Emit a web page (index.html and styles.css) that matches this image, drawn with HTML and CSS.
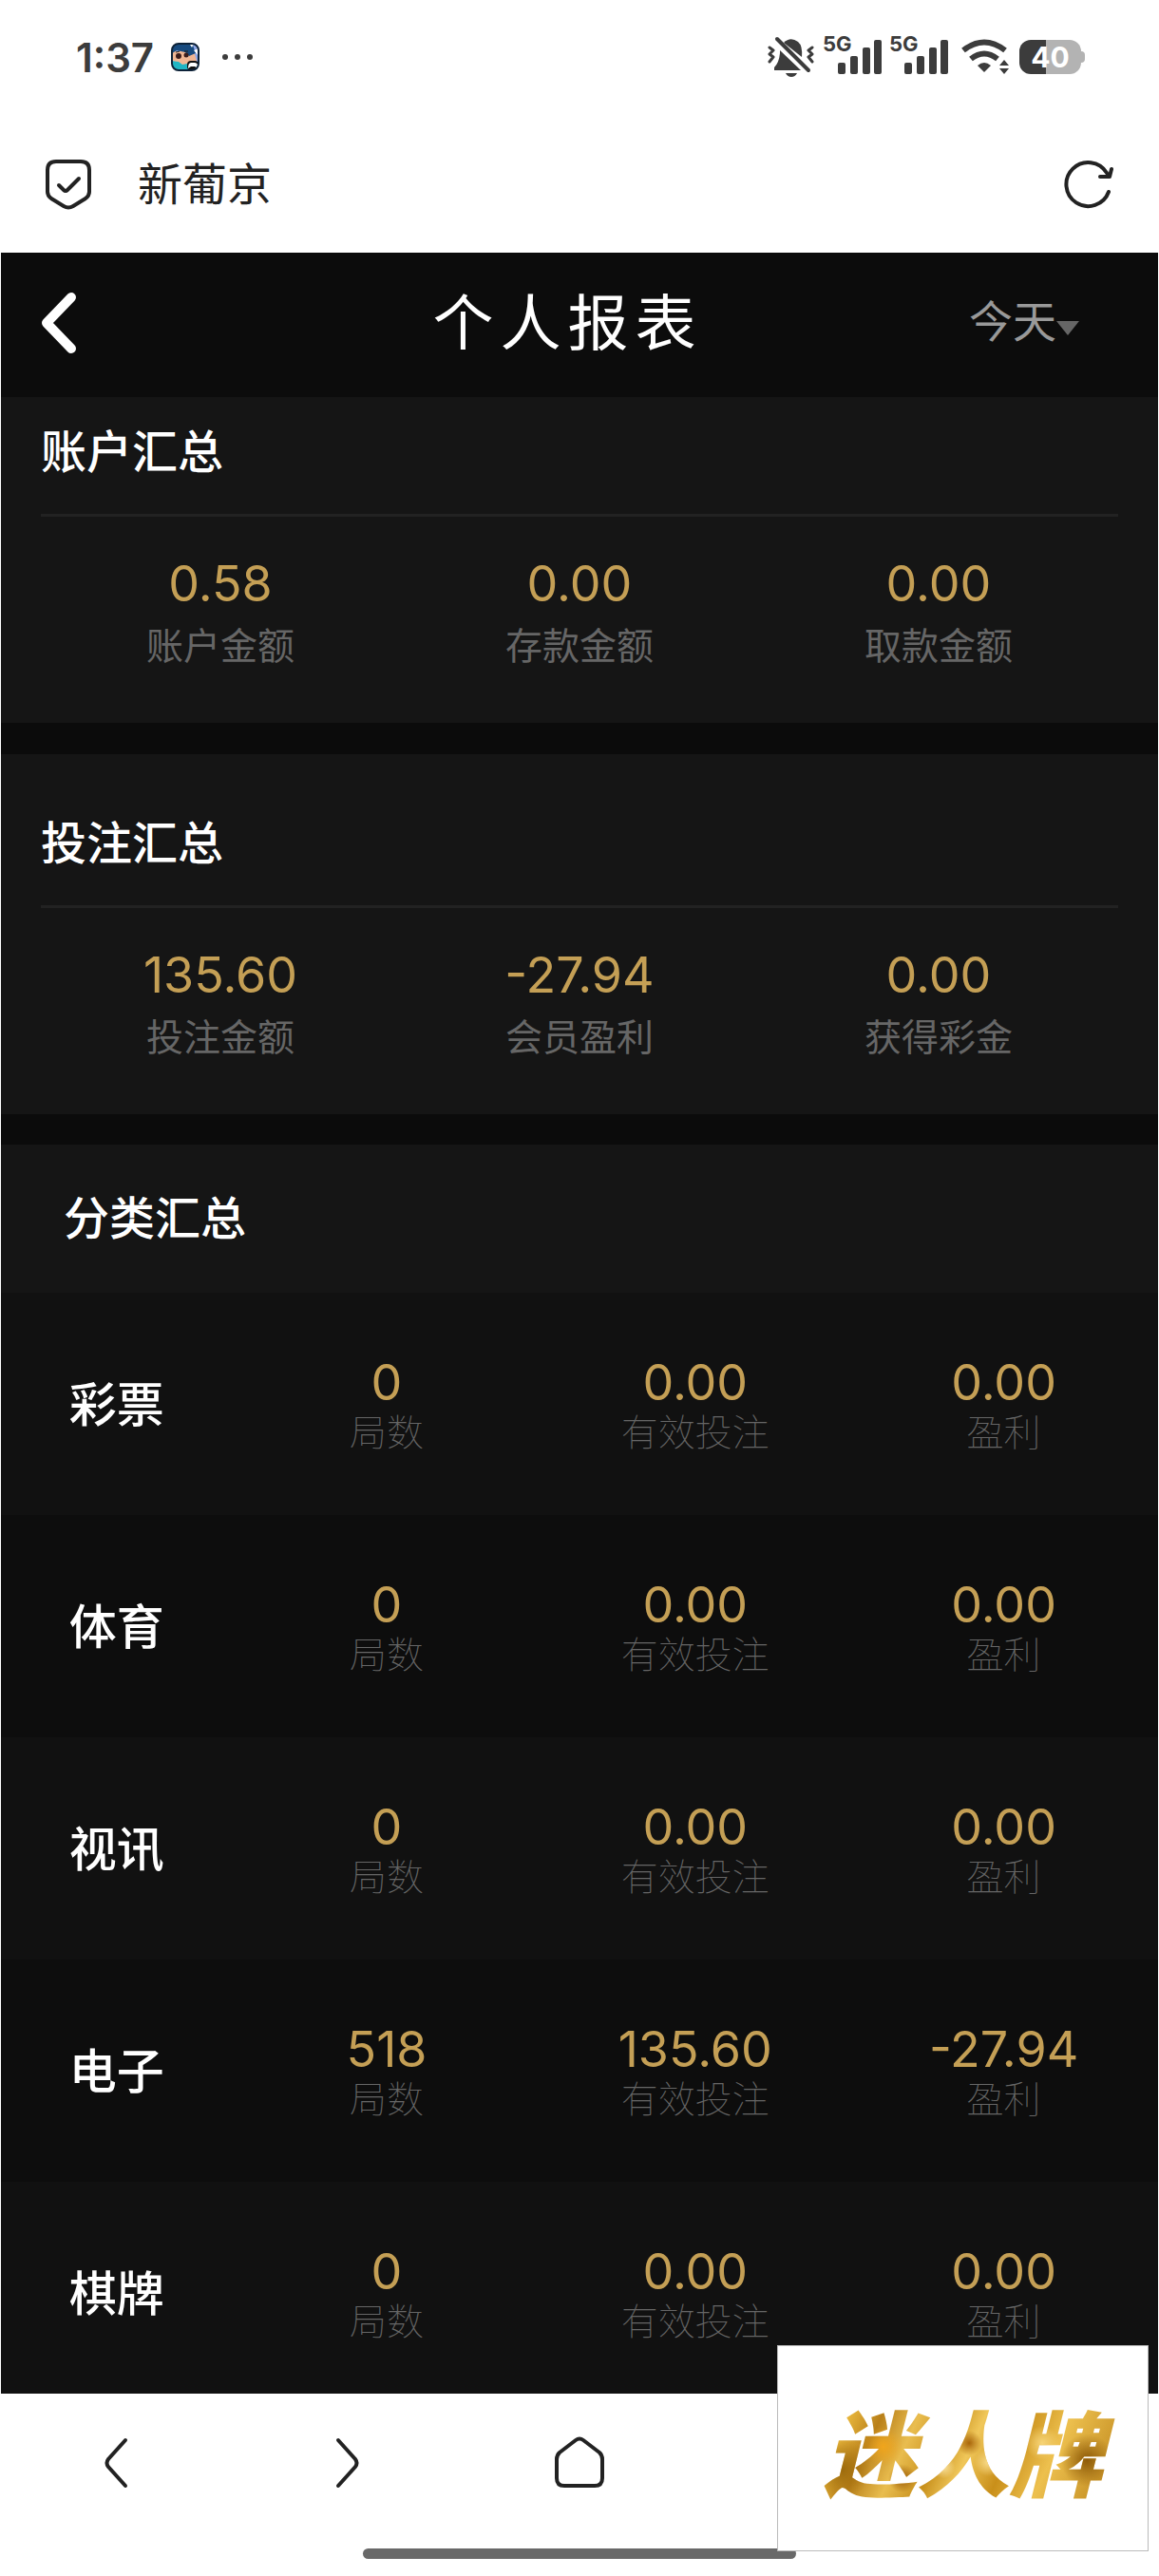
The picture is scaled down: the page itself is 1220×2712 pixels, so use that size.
FILE: index.html
```html
<!DOCTYPE html>
<html lang="zh-CN">
<head>
    <meta charset="UTF-8">
    <meta name="viewport" content="width=device-width, initial-scale=1.0">
    <title>个人报表</title>
    <link rel="stylesheet" href="styles.css">
</head>
<body>
    <!-- 状态栏 -->
    <div class="status-bar">
        <span class="time">1:37</span>
        <svg class="app-icon" width="30" height="30" viewBox="0 0 30 30">
            <clipPath id="appClip"><rect x="1" y="1" width="28" height="28" rx="7"/></clipPath>
            <g clip-path="url(#appClip)">
                <rect width="30" height="30" fill="#8fa8e8"/>
                <path d="M0 9H24L27 19L20 25L12 24L0 18Z" fill="#f0b694"/>
                <path d="M0 0H22L26 11L19 14L15 10L6 8L0 12Z" fill="#174a7e"/>
                <path d="M0 19L8 20L12 23L17 22L20 30H0Z" fill="#1fb5c4"/>
                <path d="M20 2L24 1L22 5ZM24 8L29 6V14Z" fill="#fff"/>
                <circle cx="8" cy="14" r="3" fill="#3a1c1c"/>
                <circle cx="16" cy="13" r="2.5" fill="#3a1c1c"/>
                <path d="M5 10L9 9M14 9L18 9" stroke="#1b1b1b" stroke-width="1"/>
                <rect x="17" y="19" width="12" height="10" rx="4" fill="#111"/>
                <path d="M18 27Q18 21 21 21H25Q29 21 28 27L25 25H21Z" fill="#fff"/>
            </g>
            <rect x="1" y="1" width="28" height="28" rx="7" fill="none" stroke="#0d2238" stroke-width="2"/>
        </svg>
        <svg class="more" width="32" height="8" viewBox="0 0 32 8" fill="#3c3c3c">
            <circle cx="3" cy="4" r="3"/><circle cx="16" cy="4" r="3"/><circle cx="29" cy="4" r="3"/>
        </svg>

        <div class="status-icons">
            <svg width="50" height="44" viewBox="0 0 50 44" fill="#3c3c3c">
                <path d="M13 18Q12 28 7 33V36H35L13 15Z"/>
                <path d="M17 7Q24 0 32 6Q37 10 36 22Z"/>
                <path d="M19 39H31Q29 43 25 43Q21 43 19 39Z"/>
                <path d="M10 3L43 36" stroke="#3c3c3c" stroke-width="4" stroke-linecap="round"/>
                <path d="M2 12L6 15L2 19L6 22L2 27M47 12L43 15L47 19L43 22L47 27" fill="none" stroke="#3c3c3c" stroke-width="3" stroke-linejoin="round" stroke-linecap="round"/>
            </svg>
            <div class="signal">
                <span>5G</span>
                <svg width="46" height="36" viewBox="0 0 46 36" fill="#3c3c3c">
                    <rect y="24" width="8" height="12" rx="2"/><rect x="13" y="17" width="8" height="19" rx="2"/><rect x="26" y="8" width="8" height="28" rx="2"/><rect x="38" width="8" height="36" rx="2"/>
                </svg>
            </div>
            <div class="signal">
                <span>5G</span>
                <svg width="46" height="36" viewBox="0 0 46 36" fill="#3c3c3c">
                    <rect y="24" width="8" height="12" rx="2"/><rect x="13" y="17" width="8" height="19" rx="2"/><rect x="26" y="8" width="8" height="28" rx="2"/><rect x="38" width="8" height="36" rx="2"/>
                </svg>
            </div>
            <svg class="wifi" width="50" height="38" viewBox="0 0 50 38">
                <path d="M2 12Q24 -5 46 12" fill="none" stroke="#3c3c3c" stroke-width="6"/>
                <path d="M10 21Q24 10 38 21" fill="none" stroke="#3c3c3c" stroke-width="6"/>
                <path d="M17 28Q24 22 31 28L24 35Z" fill="#3c3c3c"/>
                <path d="M40 28L45 22L50 28ZM40 31H50L45 37Z" fill="#3c3c3c"/>
            </svg>
            <div class="battery"><span>40</span></div>
        </div>
    </div>

    <!-- 浏览器地址栏 -->
    <div class="browser-bar">
        <svg width="50" height="54" viewBox="0 0 50 54" fill="none" stroke="#222" stroke-width="4" stroke-linecap="round" stroke-linejoin="round">
            <path d="M12 3H38Q47 3 47 12V35Q47 39 43 42L30 50Q25 53 20 50L7 42Q3 39 3 35V12Q3 3 12 3Z"/>
            <path d="M15 28L20 33Q22 35 24 33L36 21"/>
        </svg>
        <span class="site-name">新葡京</span>
        <button class="icon-btn" type="button" aria-label="刷新">
            <svg width="52" height="52" viewBox="0 0 52 52" fill="none" stroke="#222" stroke-width="4" stroke-linecap="round" stroke-linejoin="round">
                <path d="M47 34A23 23 0 1 1 45 14L47 17"/>
                <path d="M50 10L48 18L38 18"/>
            </svg>
        </button>
    </div>

    <!-- 报表内容 -->
    <div class="report">
        <header class="report-header">
            <button class="back-btn" type="button" aria-label="返回">
                <svg width="38" height="66" viewBox="0 0 38 66" fill="none" stroke="#fff" stroke-width="10" stroke-linecap="round" stroke-linejoin="round">
                    <path d="M33 6L7 33L33 60"/>
                </svg>
            </button>
            <h1>个人报表</h1>
            <div class="date-select">
                <select aria-label="日期">
                    <option selected>今天</option>
                    <option>昨天</option>
                </select>
            </div>
        </header>

        <section class="summary">
            <h2>账户汇总</h2>
            <dl>
                <div><dd>0.58</dd><dt>账户金额</dt></div>
                <div><dd>0.00</dd><dt>存款金额</dt></div>
                <div><dd>0.00</dd><dt>取款金额</dt></div>
            </dl>
        </section>

        <section class="summary summary-bet">
            <h2>投注汇总</h2>
            <dl>
                <div><dd>135.60</dd><dt>投注金额</dt></div>
                <div><dd>-27.94</dd><dt>会员盈利</dt></div>
                <div><dd>0.00</dd><dt>获得彩金</dt></div>
            </dl>
        </section>

        <section class="category">
            <h2>分类汇总</h2>
            <table>
                <tr>
                    <th scope="row">彩票</th>
                    <td><b>0</b><small>局数</small></td>
                    <td><b>0.00</b><small>有效投注</small></td>
                    <td><b>0.00</b><small>盈利</small></td>
                </tr>
                <tr>
                    <th scope="row">体育</th>
                    <td><b>0</b><small>局数</small></td>
                    <td><b>0.00</b><small>有效投注</small></td>
                    <td><b>0.00</b><small>盈利</small></td>
                </tr>
                <tr>
                    <th scope="row">视讯</th>
                    <td><b>0</b><small>局数</small></td>
                    <td><b>0.00</b><small>有效投注</small></td>
                    <td><b>0.00</b><small>盈利</small></td>
                </tr>
                <tr>
                    <th scope="row">电子</th>
                    <td><b>518</b><small>局数</small></td>
                    <td><b>135.60</b><small>有效投注</small></td>
                    <td><b>-27.94</b><small>盈利</small></td>
                </tr>
                <tr>
                    <th scope="row">棋牌</th>
                    <td><b>0</b><small>局数</small></td>
                    <td><b>0.00</b><small>有效投注</small></td>
                    <td><b>0.00</b><small>盈利</small></td>
                </tr>
            </table>
        </section>
    </div>

    <!-- 底部导航 -->
    <footer class="bottom-bar">
        <nav>
            <button class="icon-btn" type="button" aria-label="后退">
                <svg width="28" height="56" viewBox="0 0 28 56" fill="none" stroke="#222" stroke-width="4" stroke-linecap="round">
                    <path d="M24 4L6 24Q3 28 6 32L24 52"/>
                </svg>
            </button>
            <button class="icon-btn" type="button" aria-label="前进">
                <svg width="28" height="56" viewBox="0 0 28 56" fill="none" stroke="#222" stroke-width="4" stroke-linecap="round">
                    <path d="M4 4L22 24Q25 28 22 32L4 52"/>
                </svg>
            </button>
            <button class="icon-btn" type="button" aria-label="主页">
                <svg width="54" height="56" viewBox="0 0 54 56" fill="none" stroke="#222" stroke-width="4" stroke-linejoin="round">
                    <path d="M23 4Q27 1 31 4L48 17Q51 20 51 24V44Q51 52 43 52H11Q3 52 3 44V24Q3 20 6 17Z"/>
                </svg>
            </button>
        </nav>
        <div class="home-indicator"></div>
    </footer>

    <div class="watermark"><span>迷人牌</span></div>
</body>
</html>
```
FILE: styles.css
```css
* {
    box-sizing: border-box;
}
body {
    margin: 0;
    height: 100vh;
    display: flex;
    flex-direction: column;
    position: relative;
    background: #fff;
    font-family: Inter, "Noto Sans CJK SC", sans-serif;
}
h1, h2, dl, dd {
    margin: 0;
}
button {
    padding: 0;
    border: none;
    background: none;
    cursor: pointer;
}
svg {
    display: block;
    flex: none;
}

/* 状态栏 */
.status-bar {
    display: flex;
    align-items: center;
    height: 120px;
    flex: none;
    padding: 0 76px 0 80px;
    color: #3c3c3c;
}
.time {
    font-size: 42px;
    font-weight: 600;
}
.app-icon {
    margin-left: 18px;
}
.more {
    margin-left: 24px;
}
.status-icons {
    display: flex;
    align-items: center;
    margin-left: auto;
}
.signal {
    position: relative;
    width: 62px;
    margin-left: 8px;
}
.signal svg {
    margin-left: auto;
}
.signal span {
    position: absolute;
    left: 0;
    top: -6px;
    font-size: 22px;
    line-height: 20px;
    font-weight: 700;
}
.wifi {
    margin-left: 14px;
}
.battery {
    position: relative;
    width: 65px;
    height: 36px;
    margin: 0 6px 0 11px;
    border-radius: 12px;
    background: linear-gradient(90deg, #3c3c3c 43%, #b3b3b3 43%);
    color: #fff;
    font-size: 30px;
    line-height: 36px;
    font-weight: 700;
    text-align: center;
}
.battery::after {
    content: "";
    position: absolute;
    right: -4px;
    top: 12px;
    width: 4px;
    height: 12px;
    border-radius: 0 4px 4px 0;
    background: #b3b3b3;
}

/* 地址栏 */
.browser-bar {
    display: flex;
    align-items: center;
    height: 146px;
    flex: none;
    padding: 2px 48px 0 47px;
}
.site-name {
    flex: 1;
    margin-left: 48px;
    font-size: 47px;
    line-height: 60px;
    color: #222;
}

/* 报表 */
.report {
    flex: 1;
    min-height: 0;
    overflow: hidden;
    margin: 0 1px;
    background: #0b0b0b;
    color: #fff;
}
.report-header {
    display: flex;
    align-items: center;
    height: 152px;
    padding-bottom: 4px;
    background: #0c0c0c;
}
.back-btn {
    width: 174px;
    padding-left: 41px;
}
.report-header h1 {
    flex: 1;
    font-size: 64px;
    line-height: 92px;
    font-weight: 400;
    letter-spacing: 7px;
    text-align: center;
}
.date-select {
    display: flex;
    align-items: center;
    width: 199px;
    padding-bottom: 4px;
}
.date-select select {
    appearance: none;
    padding: 0;
    border: none;
    background: none;
    color: #999;
    font-family: inherit;
    font-size: 46px;
    line-height: 68px;
}
.date-select::after {
    content: "";
    margin: 14px 0 0 0;
    border: 12px solid transparent;
    border-top: 15px solid #666;
    border-bottom: none;
}

.summary {
    padding: 0 42px 51px;
    margin-bottom: 33px;
    background: #151515;
}
.summary-bet {
    padding-top: 36px;
    margin-bottom: 32px;
}
.summary h2,
.category h2 {
    font-size: 48px;
    font-weight: 500;
}
.summary h2 {
    padding-bottom: 7px;
    border-bottom: 3px solid #222;
    line-height: 116px;
}
.summary dl {
    display: grid;
    grid-template-columns: repeat(3, 1fr);
    padding-top: 36px;
    text-align: center;
}
.summary dl div {
    display: flex;
    flex-direction: column;
}
.summary dd {
    font-size: 52px;
    line-height: 70px;
    color: #c49f55;
}
.summary dt {
    font-size: 39px;
    line-height: 60px;
    color: #666;
}

.category h2 {
    padding-left: 66px;
    line-height: 156px;
    background: #151515;
}
.category table {
    width: 100%;
    table-layout: fixed;
    border-collapse: collapse;
}
.category tr {
    height: 234px;
    background: #111;
}
.category tr:nth-child(even) {
    background: #0d0d0d;
}
.category th,
.category td {
    padding: 0;
    text-align: center;
    vertical-align: middle;
}
.category th {
    width: 20%;
    padding-bottom: 6px;
    font-size: 50px;
    font-weight: 500;
}
.category b,
.category small {
    display: block;
}
.category b {
    font-size: 52px;
    line-height: 60px;
    font-weight: 400;
    color: #c49f55;
}
.category small {
    font-size: 39px;
    line-height: 44px;
    font-weight: 100;
    color: #666;
}

/* 底部导航 */
.bottom-bar {
    flex: none;
    padding-bottom: 18px;
    background: #fff;
}
.bottom-bar nav {
    display: grid;
    grid-template-columns: repeat(5, 1fr);
    justify-items: center;
    align-items: center;
    height: 146px;
}
.home-indicator {
    width: 456px;
    height: 11px;
    margin: 17px auto 0;
    border-radius: 6px;
    background: #696969;
}

/* 右下角水印 */
.watermark {
    position: absolute;
    right: 11px;
    bottom: 26px;
    width: 391px;
    height: 217px;
    display: flex;
    align-items: center;
    justify-content: center;
    border: 1px solid #bbb;
    background: #fff;
}
.watermark span {
    padding: 0 20px;
    font-family: "Noto Sans CJK SC", sans-serif;
    font-size: 98px;
    line-height: 120px;
    font-weight: 900;
    font-style: italic;
    color: transparent;
    background:
        radial-gradient(circle at 12% 68%, #9c6a0c 0, transparent 10%),
        radial-gradient(circle at 25% 48%, #f0a51c 0, transparent 8%),
        radial-gradient(circle at 31% 76%, #9c5c08 0, transparent 6%),
        radial-gradient(circle at 52% 45%, #a8650a 0, transparent 7%),
        radial-gradient(circle at 44% 66%, #fbe3a0 0, transparent 6%),
        radial-gradient(circle at 58% 62%, #f9dc8c 0, transparent 7%),
        radial-gradient(circle at 75% 45%, #f6d477 0, transparent 7%),
        radial-gradient(circle at 89% 60%, #8d5a08 0, transparent 9%),
        linear-gradient(115deg, #b07a14, #e8b63c 15%, #b9801a 24%, #e9bd4f 34%, #c8901c 44%, #f0c75a 52%, #c98f1a 63%, #edc04e 75%, #b67d14);
    -webkit-background-clip: text;
    background-clip: text;
}
```
